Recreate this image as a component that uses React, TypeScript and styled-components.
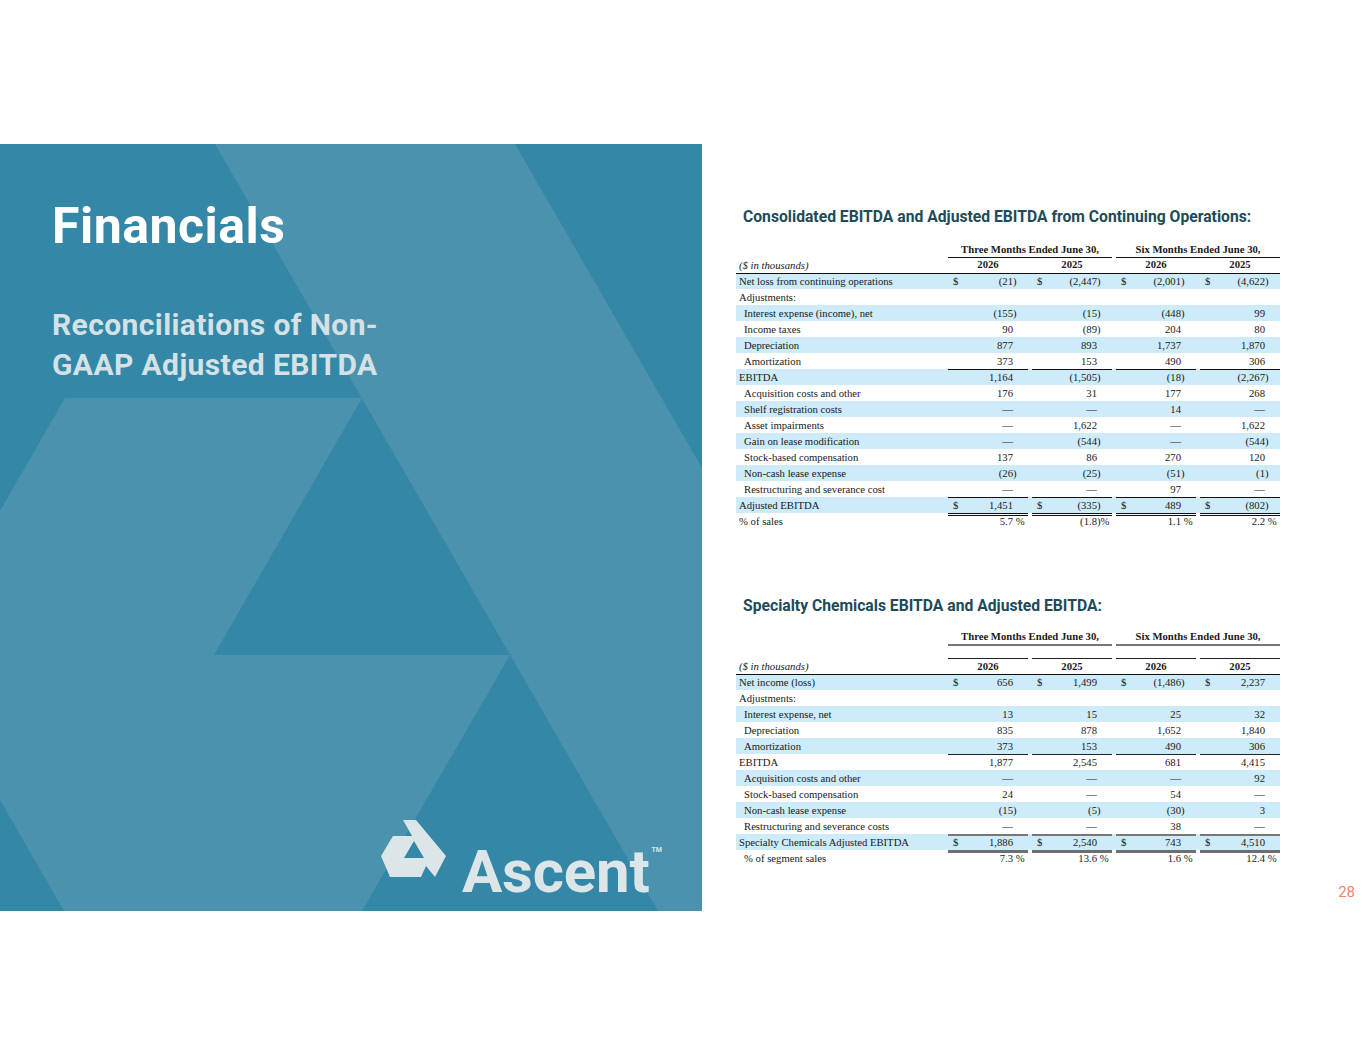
import styled, { createGlobalStyle } from "styled-components";

const GlobalStyle = createGlobalStyle`
  html, body {
    margin: 0;
    padding: 0;
    background: #ffffff;
  }
  body {
    font-family: "Liberation Serif", "Times New Roman", serif;
  }
`;

type Row = {
  label: string;
  indent?: boolean;
  dollar?: boolean;
  rule?: string;
  vals?: string[];
};

const consolidated: Row[] = [
  { label: "Net loss from continuing operations", dollar: true, vals: ["(21)", "(2,447)", "(2,001)", "(4,622)"] },
  { label: "Adjustments:" },
  { label: "Interest expense (income), net", indent: true, vals: ["(155)", "(15)", "(448)", "99"] },
  { label: "Income taxes", indent: true, vals: ["90", "(89)", "204", "80"] },
  { label: "Depreciation", indent: true, vals: ["877", "893", "1,737", "1,870"] },
  { label: "Amortization", indent: true, vals: ["373", "153", "490", "306"] },
  { label: "EBITDA", rule: "1px solid #111", vals: ["1,164", "(1,505)", "(18)", "(2,267)"] },
  { label: "Acquisition costs and other", indent: true, vals: ["176", "31", "177", "268"] },
  { label: "Shelf registration costs", indent: true, vals: ["—", "—", "14", "—"] },
  { label: "Asset impairments", indent: true, vals: ["—", "1,622", "—", "1,622"] },
  { label: "Gain on lease modification", indent: true, vals: ["—", "(544)", "—", "(544)"] },
  { label: "Stock-based compensation", indent: true, vals: ["137", "86", "270", "120"] },
  { label: "Non-cash lease expense", indent: true, vals: ["(26)", "(25)", "(51)", "(1)"] },
  { label: "Restructuring and severance cost", indent: true, vals: ["—", "—", "97", "—"] },
  { label: "Adjusted EBITDA", dollar: true, rule: "1px solid #111", vals: ["1,451", "(335)", "489", "(802)"] },
  { label: "% of sales", rule: "3px double #111", vals: ["5.7 %", "(1.8)%", "1.1 %", "2.2 %"] },
];

const specialty: Row[] = [
  { label: "Net income (loss)", dollar: true, vals: ["656", "1,499", "(1,486)", "2,237"] },
  { label: "Adjustments:" },
  { label: "Interest expense, net", indent: true, vals: ["13", "15", "25", "32"] },
  { label: "Depreciation", indent: true, vals: ["835", "878", "1,652", "1,840"] },
  { label: "Amortization", indent: true, vals: ["373", "153", "490", "306"] },
  { label: "EBITDA", rule: "1px solid #222", vals: ["1,877", "2,545", "681", "4,415"] },
  { label: "Acquisition costs and other", indent: true, vals: ["—", "—", "—", "92"] },
  { label: "Stock-based compensation", indent: true, vals: ["24", "—", "54", "—"] },
  { label: "Non-cash lease expense", indent: true, vals: ["(15)", "(5)", "(30)", "3"] },
  { label: "Restructuring and severance costs", indent: true, vals: ["—", "—", "38", "—"] },
  { label: "Specialty Chemicals Adjusted EBITDA", dollar: true, rule: "2px solid #777", vals: ["1,886", "2,540", "743", "4,510"] },
  { label: "% of segment sales", indent: true, rule: "3px solid #6e6e6e", vals: ["7.3 %", "13.6 %", "1.6 %", "12.4 %"] },
];

const splitValue = (v: string): [string, string] => {
  if (v.endsWith(")%")) return [v.slice(0, -2), ")%"];
  if (v.endsWith(" %")) return [v.slice(0, -2), " %"];
  if (v.endsWith(")")) return [v.slice(0, -1), ")"];
  return [v, ""];
};

const Slide = styled.div`
  width: 1365px;
  height: 1055px;
  padding-top: 144px;
  box-sizing: border-box;
  display: flex;
  align-items: flex-start;
`;

const Panel = styled.section`
  position: relative;
  width: 702px;
  height: 767px;
  flex-shrink: 0;
  background: #3487a6;
  overflow: hidden;
  display: flex;
  flex-direction: column;
  padding: 52px 0 0 52px;
  box-sizing: border-box;
`;

const Backdrop = styled.svg`
  position: absolute;
  inset: 0;
`;

const Title = styled.h1`
  position: relative;
  margin: 0;
  font-family: Roboto, "Liberation Sans", sans-serif;
  font-weight: 700;
  font-size: 50px;
  line-height: 60px;
  letter-spacing: 0.5px;
  color: #ffffff;
`;

const Subtitle = styled.h2`
  position: relative;
  margin: 49px 0 0;
  font-family: Roboto, "Liberation Sans", sans-serif;
  font-weight: 700;
  font-size: 30px;
  line-height: 40px;
  letter-spacing: 0.4px;
  color: #d4e2e8;
`;

const Logo = styled.div`
  position: relative;
  margin-top: auto;
  margin-right: 40px;
  margin-bottom: 9px;
  align-self: flex-end;
  display: flex;
  align-items: flex-start;
  gap: 15px;
`;

const LogoMark = styled.svg`
  flex-shrink: 0;
`;

const Wordmark = styled.span`
  font-family: Roboto, "Liberation Sans", sans-serif;
  font-weight: 700;
  font-size: 60px;
  line-height: 60px;
  letter-spacing: -0.2px;
  color: #dce5e8;
`;

const Tm = styled.sup`
  font-size: 7px;
  letter-spacing: 0;
  vertical-align: 40px;
  margin-left: 2px;
`;

const Content = styled.main`
  flex: 1;
  height: 767px;
  display: flex;
  flex-direction: column;
  padding: 63px 0 0 34px;
  box-sizing: border-box;
`;

const SectionTitle = styled.h3<{ $gap: number; $top?: number }>`
  margin: ${({ $top }) => $top ?? 0}px 0 ${({ $gap }) => $gap}px 7px;
  font-family: Roboto, "Liberation Sans", sans-serif;
  font-weight: 700;
  font-size: 15.7px;
  line-height: 20px;
  color: #1d4b58;
`;

const Table = styled.div`
  width: 544px;
  font-size: 10.7px;
  color: #1a1a1a;
`;

const Grid = styled.div<{ $shaded?: boolean; $height?: number }>`
  display: grid;
  grid-template-columns: 208px repeat(4, 80px);
  column-gap: 4px;
  height: ${({ $height }) => $height ?? 16}px;
  background: ${({ $shaded }) => ($shaded ? "#cdebf9" : "transparent")};
  line-height: 16px;
`;

const Group = styled.div<{ $line: string }>`
  grid-column: span 2;
  text-align: center;
  font-weight: 700;
  border-bottom: ${({ $line }) => $line};
  box-sizing: border-box;
`;

const Units = styled.div<{ $line: string }>`
  grid-column: 1 / -1;
  grid-row: 1;
  padding-left: 3px;
  font-style: italic;
  border-bottom: ${({ $line }) => $line};
  box-sizing: border-box;
`;

const Year = styled.div<{ $col: number; $top?: string }>`
  grid-row: 1;
  grid-column: ${({ $col }) => $col};
  text-align: center;
  font-weight: 700;
  border-top: ${({ $top }) => $top ?? "none"};
  box-sizing: border-box;
  line-height: 15px;
`;

const Label = styled.div<{ $indent?: boolean }>`
  padding-left: ${({ $indent }) => ($indent ? 8 : 3)}px;
  white-space: nowrap;
`;

const Value = styled.div<{ $rule?: string }>`
  position: relative;
  display: flex;
  align-items: center;
  padding-left: 5px;
  white-space: nowrap;

  &::before {
    content: "";
    position: absolute;
    left: 0;
    right: 0;
    top: 0;
    border-top: ${({ $rule }) => $rule ?? "none"};
  }
`;

const Dollar = styled.span`
  margin-right: auto;
`;

const Num = styled.span`
  margin-left: auto;
`;

const Suffix = styled.span`
  width: 15px;
  flex-shrink: 0;
  white-space: pre;
  text-align: left;
`;

const PageNumber = styled.div`
  margin-top: auto;
  margin-right: 10px;
  margin-bottom: 11px;
  align-self: flex-end;
  font-family: Roboto, "Liberation Sans", sans-serif;
  font-size: 15px;
  line-height: 16px;
  color: #e8846b;
`;

const DataRows = ({ rows }: { rows: Row[] }) => (
  <>
    {rows.map((r, i) => (
      <Grid key={r.label} $shaded={i % 2 === 0}>
        <Label $indent={r.indent}>{r.label}</Label>
        {r.vals?.map((v, j) => {
          const [num, suffix] = splitValue(v);
          return (
            <Value key={j} $rule={r.rule}>
              {r.dollar && <Dollar>$</Dollar>}
              <Num>{num}</Num>
              <Suffix>{suffix}</Suffix>
            </Value>
          );
        })}
      </Grid>
    ))}
  </>
);

const Periods = ({ line, height }: { line: string; height: number }) => (
  <Grid $height={height}>
    <div />
    <Group $line={line}>Three Months Ended June 30,</Group>
    <Group $line={line}>Six Months Ended June 30,</Group>
  </Grid>
);

const Years = ({ top }: { top?: string }) => (
  <Grid $height={16}>
    <Units $line="1px solid #111">($ in thousands)</Units>
    {["2026", "2025", "2026", "2025"].map((y, i) => (
      <Year key={i} $col={i + 2} $top={top}>
        {y}
      </Year>
    ))}
  </Grid>
);

const App = () => (
  <>
    <GlobalStyle />
    <Slide>
      <Panel>
        <Backdrop width="702" height="767" viewBox="0 0 702 767">
          <polygon fill="#4b92ae" points="215,0 515,0 702,324 702,767 658,767" />
          <polygon
            fill="#4b92ae"
            points="0,367 65,254 362,254 214,511 510,511 362,767 64,767 0,656"
          />
        </Backdrop>
        <Title>Financials</Title>
        <Subtitle>
          Reconciliations of Non-
          <br />
          GAAP Adjusted EBITDA
        </Subtitle>
        <Logo>
          <LogoMark width="66" height="58" viewBox="0 0 66 58">
            <path
              fill="#dce5e8"
              fillRule="evenodd"
              d="M22 0 H35 L65 36 L54 57 L45 46 L40 57 H9 L0 36 L12 16 H31 Z M33 21 L43 38 H23 Z"
            />
          </LogoMark>
          <Wordmark>
            Ascent
            <Tm>TM</Tm>
          </Wordmark>
        </Logo>
      </Panel>
      <Content>
        <SectionTitle $gap={14}>
          Consolidated EBITDA and Adjusted EBITDA from Continuing Operations:
        </SectionTitle>
        <Table>
          <Periods line="1px solid #111" height={16} />
          <Years />
          <DataRows rows={consolidated} />
        </Table>
        <SectionTitle $top={67} $gap={12}>
          Specialty Chemicals EBITDA and Adjusted EBITDA:
        </SectionTitle>
        <Table>
          <Periods line="2px solid #777" height={18} />
          <Grid $height={12} />
          <Years top="1px solid #222" />
          <DataRows rows={specialty} />
        </Table>
        <PageNumber>28</PageNumber>
      </Content>
    </Slide>
  </>
);

export default App;
